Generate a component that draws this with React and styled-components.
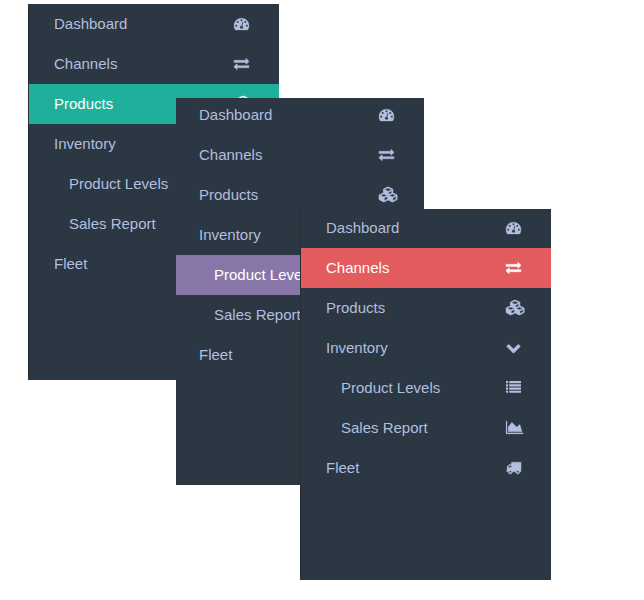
import React from 'react';
import styled, { createGlobalStyle } from 'styled-components';

const GlobalStyle = createGlobalStyle`
  body {
    margin: 0;
    background: #fff;
    font-family: "Liberation Sans", Arial, sans-serif;
  }
`;

const Stage = styled.main`
  position: relative;
  height: 600px;
  overflow: hidden;
`;

/* The three menus overlap each other like a fanned-out stack of cards. */
const Sidebar = styled.nav`
  position: absolute;
  box-sizing: border-box;
  left: ${(p) => p.$x}px;
  top: ${(p) => p.$y}px;
  width: ${(p) => p.$width}px;
  height: ${(p) => p.$height}px;
  overflow: hidden;
  background: #2b3743;
  border-left: ${(p) => (p.$edge ? '1px solid #292c30' : '0')};
`;

const Menu = styled.ul`
  display: flex;
  flex-direction: column;
  list-style: none;
  padding: 0;
  margin: ${(p) => -p.$cut}px 0 0;
`;

const Item = styled.li`
  display: grid;
  grid-template-columns: 1fr 45px;
  box-sizing: border-box;
  height: 40px;
  padding-left: ${(p) => p.$indent}px;
  font-size: 15px;
  line-height: 40px;
  white-space: nowrap;
  color: ${(p) => (p.$accent ? '#fff' : '#b2bfdf')};
  background: ${(p) => p.$accent || 'transparent'};
`;

const Glyph = styled.svg`
  display: block;
  height: 15px;
  width: ${(p) => p.$width}px;
  margin-top: 12px;
  overflow: visible;
  fill: currentColor;
  stroke: currentColor;
  stroke-width: ${(p) => p.$weight};
`;

const listCell = (x, y, w) =>
  `M${x + w} ${y + 32}v192q0 13-9.5 22.5t-22.5 9.5h-${w - 64}q-13 0-22.5-9.5t-9.5-22.5v-192q0-13 9.5-22.5t22.5-9.5h${w - 64}q13 0 22.5 9.5t9.5 22.5z`;

const ICONS = {
  gauge: {
    units: 1792,
    weight: 40,
    d: 'M384 1152q0-53-37.5-90.5t-90.5-37.5-90.5 37.5-37.5 90.5 37.5 90.5 90.5 37.5 90.5-37.5 37.5-90.5zm192-448q0-53-37.5-90.5t-90.5-37.5-90.5 37.5-37.5 90.5 37.5 90.5 90.5 37.5 90.5-37.5 37.5-90.5zm428 481l101-382q6-26-7.5-48.5t-38.5-29.5-48 6.5-30 39.5l-101 382q-60 5-107 43.5t-63 98.5q-20 77 20 146t117 89 146-20 89-117q16-60-6-117t-72-91zm660-33q0-53-37.5-90.5t-90.5-37.5-90.5 37.5-37.5 90.5 37.5 90.5 90.5 37.5 90.5-37.5 37.5-90.5zm-640-640q0-53-37.5-90.5t-90.5-37.5-90.5 37.5-37.5 90.5 37.5 90.5 90.5 37.5 90.5-37.5 37.5-90.5zm448 192q0-53-37.5-90.5t-90.5-37.5-90.5 37.5-37.5 90.5 37.5 90.5 90.5 37.5 90.5-37.5 37.5-90.5zm320 448q0 261-141 483-19 29-54 29h-1402q-35 0-54-29-141-221-141-483 0-182 71-348t191-286 286-191 348-71 348 71 286 191 191 286 71 348z',
  },
  exchange: {
    units: 1792,
    weight: 50,
    d: 'M1792 1184v192q0 13-9.5 22.5t-22.5 9.5h-1376v192q0 13-9.5 22.5t-22.5 9.5q-12 0-24-10l-319-320q-9-9-9-22 0-14 9-23l320-320q9-9 23-9 13 0 22.5 9.5t9.5 22.5v192h1376q13 0 22.5 9.5t9.5 22.5zm0-544q0 14-9 23l-320 320q-9 9-23 9-13 0-22.5-9.5t-9.5-22.5v-192h-1376q-13 0-22.5-9.5t-9.5-22.5v-192q0-13 9.5-22.5t22.5-9.5h1376v-192q0-14 9-23t23-9q12 0 24 10l319 319q9 9 9 23z',
  },
  cubes: {
    units: 2304,
    weight: 60,
    d: 'M640 1632l384-192v-314l-384 164v342zm-64-454l404-173-404-173-404 173zm1088 454l384-192v-314l-384 164v342zm-64-454l404-173-404-173-404 173zm-448-293l384-165v-266l-384 164v267zm-64-379l441-189-441-189-441 189zm1088 518v416q0 36-19 67t-52 47l-448 224q-25 14-57 14t-57-14l-448-224q-4-2-7-4-2 2-7 4l-448 224q-25 14-57 14t-57-14l-448-224q-33-16-52-47t-19-67v-416q0-38 21.5-70t56.5-48l434-186v-400q0-38 21.5-70t56.5-48l448-192q23-10 50-10t50 10l448 192q35 16 56.5 48t21.5 70v400l434 186q36 16 57 48t21 70z',
  },
  chevron: {
    units: 1792,
    weight: 50,
    d: 'M1683 808l-742 741q-19 19-45 19t-45-19l-742-741q-19-19-19-45.5t19-45.5l166-165q19-19 45-19t45 19l531 531 531-531q19-19 45-19t45 19l166 165q19 19 19 45.5t-19 45.5z',
  },
  list: {
    units: 1792,
    weight: 0,
    d: [128, 512, 896, 1280].map((y) => listCell(0, y, 256) + listCell(384, y, 1408)).join(''),
  },
  area: {
    units: 2048,
    weight: 20,
    d: 'M2048 1536v128h-2048v-1536h128v1408h1920zm-384-1024l256 896h-1664v-576l448-576 576 576z',
  },
  truck: {
    units: 1792,
    weight: 50,
    d: 'M640 1408q0-52-38-90t-90-38-90 38-38 90 38 90 90 38 90-38 38-90zm-384-512h384v-256h-158q-13 0-22 9l-195 195q-9 9-9 22v30zm1280 512q0-52-38-90t-90-38-90 38-38 90 38 90 90 38 90-38 38-90zm256-1088v1024q0 15-4 26.5t-13.5 18.5-16.5 11.5-23.5 6-22.5 2-25.5 0-22.5-.5q0 106-75 181t-181 75-181-75-75-181h-384q0 106-75 181t-181 75-181-75-75-181h-64q-3 0-22.5.5t-25.5 0-22.5-2-23.5-6-16.5-11.5-13.5-18.5-4-26.5q0-26 19-45t45-19v-320q0-8-.5-35t0-38 2.5-34.5 6.5-37 14-30.5 22.5-30l198-198q19-19 50.5-32t58.5-13h160v-192q0-26 19-45t45-19h1024q26 0 45 19t19 45z',
  },
};

const Icon = ({ name }) => {
  const { units, weight, d } = ICONS[name];
  return (
    <Glyph
      $width={(units / 1792) * 15}
      $weight={weight}
      viewBox={`0 0 ${units} 1792`}
      aria-hidden="true"
    >
      <path d={d} />
    </Glyph>
  );
};

const ENTRIES = [
  { label: 'Dashboard', icon: 'gauge' },
  { label: 'Channels', icon: 'exchange' },
  { label: 'Products', icon: 'cubes' },
  { label: 'Inventory', icon: 'chevron' },
  { label: 'Product Levels', icon: 'list', nested: true },
  { label: 'Sales Report', icon: 'area', nested: true },
  { label: 'Fleet', icon: 'truck' },
];

const PANELS = [
  { x: 28, y: 4, width: 251, height: 376, edge: true, cut: 0, pad: 25, active: 'Products', accent: '#1eb09b' },
  { x: 176, y: 98, width: 248, height: 387, edge: false, cut: 3, pad: 23, active: 'Product Levels', accent: '#8976a8' },
  { x: 300, y: 209, width: 251, height: 371, edge: true, cut: 1, pad: 25, active: 'Channels', accent: '#e35b5c' },
];

export default function App() {
  return (
    <>
      <GlobalStyle />
      <Stage>
        {PANELS.map((p) => (
          <Sidebar key={p.active} $x={p.x} $y={p.y} $width={p.width} $height={p.height} $edge={p.edge}>
            <Menu $cut={p.cut}>
              {ENTRIES.map((e) => (
                <Item
                  key={e.label}
                  $indent={p.pad + (e.nested ? 15 : 0)}
                  $accent={e.label === p.active ? p.accent : undefined}
                >
                  <span>{e.label}</span>
                  <Icon name={e.icon} />
                </Item>
              ))}
            </Menu>
          </Sidebar>
        ))}
      </Stage>
    </>
  );
}
